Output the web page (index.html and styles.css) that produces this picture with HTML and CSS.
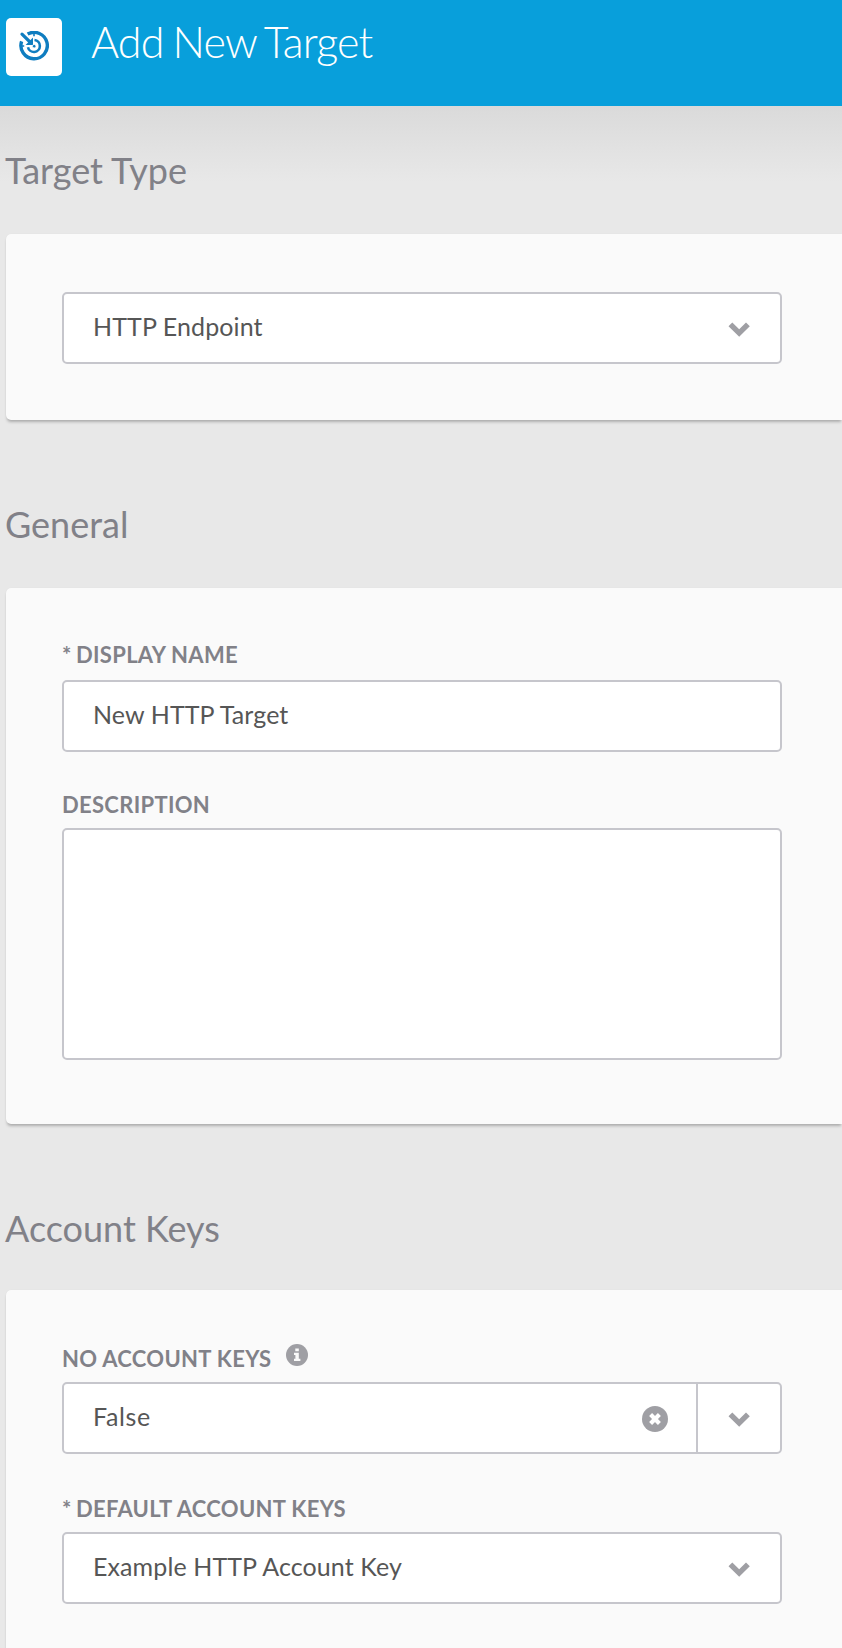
FILE: index.html
```
<!DOCTYPE html>
<html lang="en">
<head>
<meta charset="utf-8">
<title>Add New Target</title>
<link rel="stylesheet" href="styles.css">
</head>
<body>
<svg class="defs" width="0" height="0">
  <symbol id="chevron" viewBox="0 0 22 15"><path d="M0.5 4.2 4.3 .4 11.2 7.3 18 .4l3.8 3.8L11.2 14.8Z"/></symbol>
</svg>
<header class="header">
  <div class="badge">
    <svg width="30" height="30" viewBox="0 0 30 30" fill="none" stroke="#0f7dc0">
      <path d="M8.6 3.1A13.2 13.2 0 1 1 2.6 10.4" stroke-width="3.4"/>
      <path d="M15.5 9A6 6 0 1 1 9 16.2" stroke-width="2.6"/>
      <path d="M3 3.2 12 12" stroke-width="3.2" stroke-linecap="round"/>
      <path d="M14 14H6.6L14 6.6Z" fill="#0f7dc0" stroke="none"/>
      <path d="M15 2.2v3M2.2 15h3" stroke-width="1.6"/>
      <circle cx="15.2" cy="15.2" r="1.8" fill="#0f7dc0" stroke="#fff" stroke-width=".8"/>
    </svg>
  </div>
  <h1 class="title">Add New Target</h1>
</header>
<main class="main">
  <h2 class="section-title">Target Type</h2>
  <section class="card card-type">
    <div class="field"><span class="value">HTTP Endpoint</span><svg class="chevron"><use href="#chevron"/></svg></div>
  </section>
  <h2 class="section-title">General</h2>
  <section class="card card-general">
    <div class="label"><span class="star">*</span><span>DISPLAY NAME</span></div>
    <div class="field"><span class="value">New HTTP Target</span></div>
    <div class="label">DESCRIPTION</div>
    <div class="field area"></div>
  </section>
  <h2 class="section-title keys-title">Account Keys</h2>
  <section class="card card-keys">
    <div class="label"><span>NO ACCOUNT KEYS</span><svg class="info" width="22" height="22" viewBox="0 0 22 22"><circle cx="11" cy="11" r="11" fill="#9f9fa4"/><path d="M9.3 4.4h3.5v2.8H9.3ZM8 8.8h4.8v6h1.6v2.2H8v-2.2h1.4v-3.8H8Z" fill="#fafafa"/></svg></div>
    <div class="field split"><span class="value short">False</span>
      <svg class="clear" width="26" height="26" viewBox="0 0 26 26"><circle cx="13" cy="13" r="13" fill="#9f9fa4"/><path d="M8.6 8.6l8.8 8.8M17.4 8.6l-8.8 8.8" stroke="#fff" stroke-width="4.2"/></svg>
      <span class="toggle"><svg class="chevron"><use href="#chevron"/></svg></span>
    </div>
    <div class="label"><span class="star">*</span><span>DEFAULT ACCOUNT KEYS</span></div>
    <div class="field"><span class="value">Example HTTP Account Key</span><svg class="chevron"><use href="#chevron"/></svg></div>
  </section>
</main>
</body>
</html>
```
FILE: styles.css
```
* { box-sizing: border-box; }
body { margin: 0; height: 1648px; overflow: hidden; background: #e8e8e8; font-family: Lato, sans-serif; }
.defs { display: block; }
.header { height: 106px; padding: 18px 0 0 6px; background: #089fdb; display: flex; align-items: flex-start; }
.badge { width: 56px; height: 58px; background: #fff; border-radius: 5px; padding: 13px; }
.badge svg { display: block; }
.title { margin: -1px 0 0 29px; font-size: 43px; font-weight: 300; line-height: 50px; letter-spacing: -.85px; word-spacing: -1.8px; color: #fff; white-space: nowrap; }
.main { padding-left: 6px; background: linear-gradient(#dadada, #e8e8e8 76px); }
.section-title { margin: 0 0 0 -1px; font-size: 36px; font-weight: 400; line-height: 44px; color: #818188; height: 168px; padding-top: 82px; }
.section-title:first-child { height: 128px; padding-top: 42px; }
.keys-title { height: 166px; }
.card { background: #fafafa; border-radius: 5px 0 0 5px; box-shadow: 0 3px 3px -1px rgba(0,0,0,.25), 0 0 1px rgba(0,0,0,.08); padding-left: 56px; }
.card-type { height: 186px; padding-top: 58px; }
.card-general { height: 536px; padding-top: 46px; }
.card-keys { height: 400px; padding-top: 46px; }
.label { height: 46px; padding-top: 6px; display: flex; align-items: flex-start; font-size: 22px; line-height: 30px; font-weight: 700; letter-spacing: .3px; color: #818188; white-space: pre; }
.card-keys .label { padding-top: 8px; }
.field + .label { height: 76px; padding-top: 38px; }
.card-keys .field + .label { height: 78px; padding-top: 40px; }
.star { width: 14px; }
.info { margin: 0 0 0 15px; }
.field { width: 720px; height: 72px; border: 2px solid #c6c6cc; border-radius: 5px; background: #fff; display: flex; align-items: center; padding: 0 30px 0 29px; }
.area { height: 232px; }
.value { flex: 1; font-size: 25px; line-height: 30px; letter-spacing: .1px; color: #565656; padding-bottom: 4px; }
.short { letter-spacing: .6px; }
.chevron { width: 22px; height: 15px; margin-top: 2px; fill: #9f9fa4; }
.split { padding-right: 0; }
.clear { margin-right: 28px; margin-top: 2px; }
.toggle { width: 84px; height: 68px; border-left: 2px solid #c6c6cc; display: flex; align-items: center; padding-left: 30px; }
```
